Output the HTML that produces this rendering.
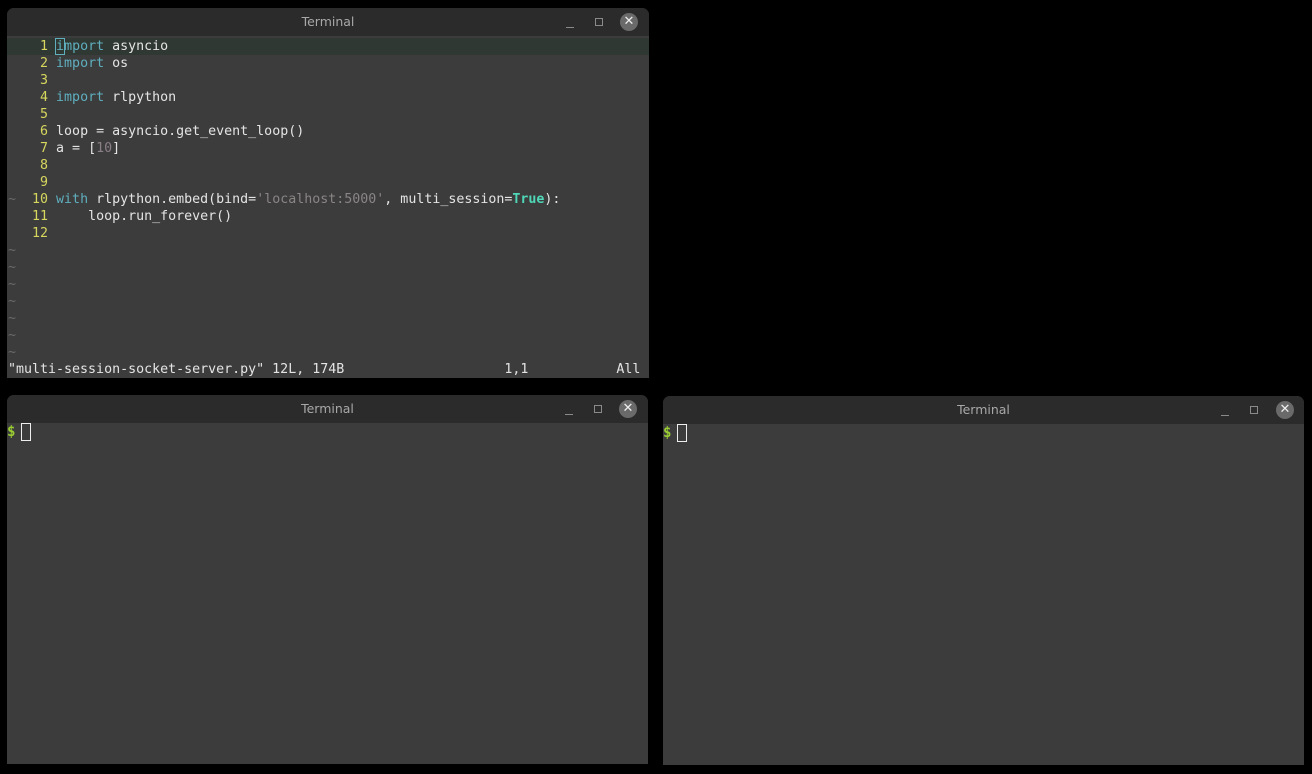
<!DOCTYPE html>
<html><head><style>
*{margin:0;padding:0;box-sizing:border-box}
body{width:1312px;height:774px;background:#000;position:relative;overflow:hidden;font-family:"DejaVu Sans Mono","Liberation Mono",monospace}
.win{position:absolute;background:#3c3c3c;border-radius:7px 7px 0 0;overflow:hidden}
.tb{position:absolute;left:0;right:0;top:0;height:28px;background:#2b2b2b;color:#a8a8a8;font:12.5px "DejaVu Sans","Liberation Sans",sans-serif;text-align:center;line-height:28px}
.min{position:absolute;top:19px;width:8px;height:1px;background:#8a8a8a}
.max{position:absolute;top:10px;width:8px;height:8px;border:1px solid #8a8a8a}
.cls{position:absolute;top:5px;width:18px;height:18px;border-radius:50%;background:#6a6a6a;color:#eee;font:bold 13px "DejaVu Sans",sans-serif;line-height:18px;text-align:center}
.code{position:absolute;left:1px;top:30px;font-size:13.3px;line-height:17px;color:#e4e4e4;white-space:pre}
.ln{color:#d7d75f}
.k{color:#5fafbf}
.n{color:#8a7f86}
.s{color:#8a8585}
.t{color:#4fd7b7;font-weight:bold}
.tl{color:#6a6a6a}
.cl{position:absolute;left:0;right:0;top:30px;height:17px;background:#303833}
.prompt{position:absolute;left:0;top:29px;font-size:14px;color:#9acd32;font-weight:bold}
.cur{position:absolute;top:28px;width:10px;height:18px;border:1px solid #eee}
</style></head><body>

<div class="win" style="left:7px;top:8px;width:642px;height:370px">
 <div class="tb">Terminal</div>
 <div class="min" style="left:559px"></div>
 <div class="max" style="left:588px"></div>
 <div class="cls" style="left:613px">✕</div>
 <div class="cl"></div>
 <div class="code"><span class="ln">    1 </span><span class="k" style="outline:1px solid #5fafbf">i</span><span class="k">mport</span> asyncio
<span class="ln">    2 </span><span class="k">import</span> os
<span class="ln">    3 </span>
<span class="ln">    4 </span><span class="k">import</span> rlpython
<span class="tl">    </span><span class="ln">5 </span>
<span class="ln">    6 </span>loop = asyncio.get_event_loop()
<span class="ln">    7 </span>a = [<span class="n">10</span>]
<span class="ln">    8 </span>
<span class="ln">    9 </span>
<span class="tl">~</span><span class="ln">  10 </span><span class="k">with</span> rlpython.embed(bind=<span class="s">'localhost:5000'</span>, multi_session=<span class="t">True</span>):
<span class="ln">   11 </span>    loop.run_forever()
<span class="ln">   12 </span>
<span class="tl">~
~
~
~
~
~
~</span>
"multi-session-socket-server.py" 12L, 174B                    1,1           All</div>
</div>

<div class="win" style="left:7px;top:395px;width:641px;height:369px">
 <div class="tb">Terminal</div>
 <div class="min" style="left:558px"></div>
 <div class="max" style="left:587px"></div>
 <div class="cls" style="left:612px">✕</div>
 <div class="prompt">$</div>
 <div class="cur" style="left:14px"></div>
</div>

<div class="win" style="left:663px;top:396px;width:641px;height:369px">
 <div class="tb">Terminal</div>
 <div class="min" style="left:558px"></div>
 <div class="max" style="left:587px"></div>
 <div class="cls" style="left:613px">✕</div>
 <div class="prompt">$</div>
 <div class="cur" style="left:14px"></div>
</div>

</body></html>
